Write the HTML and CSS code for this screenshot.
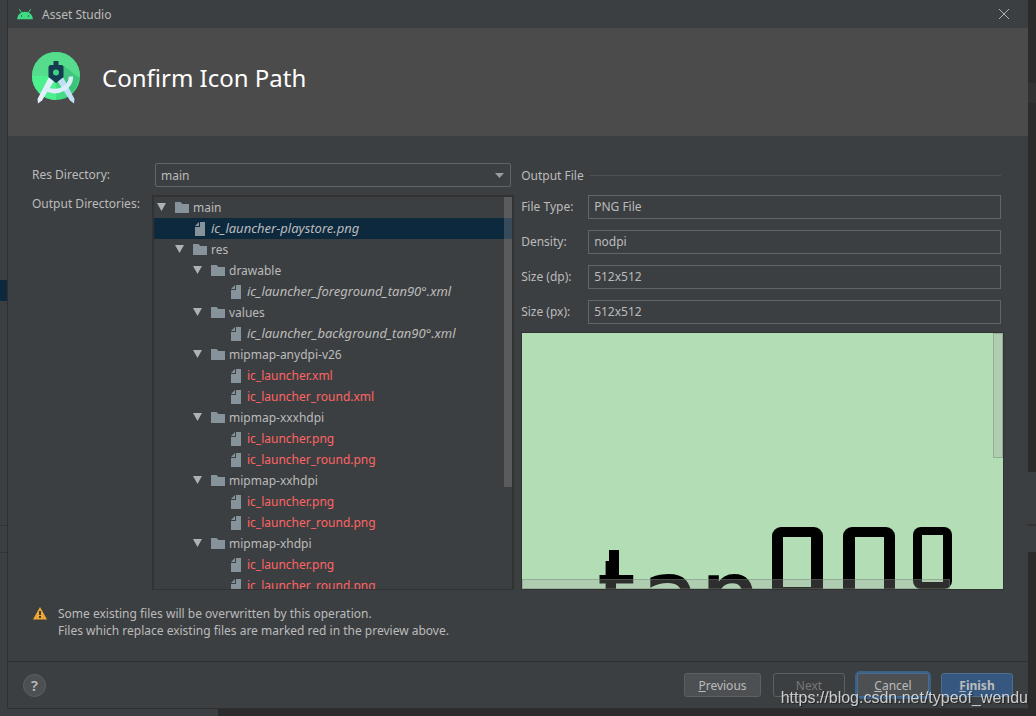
FILE: index.html
```html
<!DOCTYPE html>
<html lang="en">
<head>
    <meta charset="UTF-8">
    <meta name="viewport" content="width=device-width, initial-scale=1.0">
    <title>Asset Studio</title>
    <link rel="stylesheet" href="styles.css">
</head>
<body>
    <!-- shared icons -->
    <svg class="sprite" width="0" height="0" aria-hidden="true">
        <symbol id="arrow" viewBox="0 0 10 9"><path d="M0 0h9L4.500 8z" fill="#afb1b3"/></symbol>
        <symbol id="folder" viewBox="0 0 14 11"><path d="M0 0h5.500l2 2H14v9H0z" fill="#87939a"/></symbol>
        <symbol id="file" viewBox="0 0 14 14"><path d="M7 0h5v14H2V5h5z" fill="#87939a"/><path d="M6 0v4H2z" fill="#87939a"/></symbol>
    </svg>

    <div class="ide-left"></div>
    <main class="dialog">
        <div class="titlebar">
            <svg class="android" width="16" height="11" viewBox="0 0 16 11">
                <path d="M0 10.300A8 7.600 0 0 1 16 10.300z" fill="#3ddc84"/>
                <path d="M2.600 .6l1.800 3M13.400 .6l-1.800 3" stroke="#3ddc84" stroke-linecap="round"/>
                <circle cx="4.500" cy="7" r=".7" fill="#2f4a3c"/>
                <circle cx="11.500" cy="7" r=".7" fill="#2f4a3c"/>
            </svg>
            <span class="title">Asset Studio</span>
            <button class="close" aria-label="Close">
                <svg width="10" height="10" viewBox="0 0 10 10"><path d="M0 0l10 10M10 0L0 10" stroke="#afb1b3"/></svg>
            </button>
        </div>

        <header class="banner">
            <svg width="48" height="52" viewBox="0 0 48 52">
                <circle cx="24" cy="24" r="24" fill="#43dc85"/>
                <path d="M0 24a24 24 0 0 1 48 0z" fill="#55dc8c"/>
                <path d="M0 24h24v24A24 24 0 0 1 0 24z" fill="#4df08e"/>
                <path d="M31 13l16 13a24 24 0 0 1-10 17L24 30z" fill="#35b873" opacity=".6"/>
                <path d="M16.500 26h5.500v3L10 48.500 6 51.500 5.500 47z" fill="#e3f0fb"/>
                <path d="M26 26h5.500l11 21-.5 4.500-4-3L26 30z" fill="#c3dff5"/>
                <path d="M14.500 37Q22 41 30 37.500 39 33.500 39 24.500" fill="none" stroke="#dcecfb" stroke-width="4.500"/>
                <path d="M21.500 9h5v4H30l1.500 1.500V25L24 31 16.500 25V14.500L18 13h3.500z" fill="#153b51"/>
                <circle cx="24" cy="20.500" r="3" fill="#3fd184"/>
            </svg>
            <h1>Confirm Icon Path</h1>
        </header>

        <div class="content">
            <label class="label-res" for="resDir">Res Directory:</label>
            <div class="combo">
                <select id="resDir"><option>main</option></select>
                <svg width="10" height="5" viewBox="0 0 10 5"><path d="M0 0h9L4.500 5z" fill="#9a9da0"/></svg>
            </div>

            <div class="label-out" id="treeLabel">Output Directories:</div>
            <div class="tree-box">
                <ul class="tree" role="tree" aria-labelledby="treeLabel">
                    <li class="dir"><svg class="arrow"><use href="#arrow"/></svg><svg class="folder"><use href="#folder"/></svg>main</li>
                    <li class="file level1 new selected"><svg><use href="#file"/></svg>ic_launcher-playstore.png</li>
                    <li class="dir level1"><svg class="arrow"><use href="#arrow"/></svg><svg class="folder"><use href="#folder"/></svg>res</li>
                    <li class="dir level2"><svg class="arrow"><use href="#arrow"/></svg><svg class="folder"><use href="#folder"/></svg>drawable</li>
                    <li class="file level3 new"><svg><use href="#file"/></svg>ic_launcher_foreground_tan90°.xml</li>
                    <li class="dir level2"><svg class="arrow"><use href="#arrow"/></svg><svg class="folder"><use href="#folder"/></svg>values</li>
                    <li class="file level3 new"><svg><use href="#file"/></svg>ic_launcher_background_tan90°.xml</li>
                    <li class="dir level2"><svg class="arrow"><use href="#arrow"/></svg><svg class="folder"><use href="#folder"/></svg>mipmap-anydpi-v26</li>
                    <li class="file level3 replace"><svg><use href="#file"/></svg>ic_launcher.xml</li>
                    <li class="file level3 replace"><svg><use href="#file"/></svg>ic_launcher_round.xml</li>
                    <li class="dir level2"><svg class="arrow"><use href="#arrow"/></svg><svg class="folder"><use href="#folder"/></svg>mipmap-xxxhdpi</li>
                    <li class="file level3 replace"><svg><use href="#file"/></svg>ic_launcher.png</li>
                    <li class="file level3 replace"><svg><use href="#file"/></svg>ic_launcher_round.png</li>
                    <li class="dir level2"><svg class="arrow"><use href="#arrow"/></svg><svg class="folder"><use href="#folder"/></svg>mipmap-xxhdpi</li>
                    <li class="file level3 replace"><svg><use href="#file"/></svg>ic_launcher.png</li>
                    <li class="file level3 replace"><svg><use href="#file"/></svg>ic_launcher_round.png</li>
                    <li class="dir level2"><svg class="arrow"><use href="#arrow"/></svg><svg class="folder"><use href="#folder"/></svg>mipmap-xhdpi</li>
                    <li class="file level3 replace"><svg><use href="#file"/></svg>ic_launcher.png</li>
                    <li class="file level3 replace"><svg><use href="#file"/></svg>ic_launcher_round.png</li>
                </ul>
                <div class="tree-scroll"></div>
            </div>

            <section class="output">
                <h2>Output File</h2>
                <form class="fields">
                    <label for="fileType">File Type:</label>
                    <input id="fileType" type="text" value="PNG File" readonly>
                    <label for="density">Density:</label>
                    <input id="density" type="text" value="nodpi" readonly>
                    <label for="sizeDp">Size (dp):</label>
                    <input id="sizeDp" type="text" value="512x512" readonly>
                    <label for="sizePx">Size (px):</label>
                    <input id="sizePx" type="text" value="512x512" readonly>
                </form>
                <div class="preview">
                    <!-- launcher icon at full size, cut off by the viewport -->
                    <svg width="512" height="512" viewBox="0 0 512 512">
                        <text class="icon-text" x="76 120 179" y="294">tan</text>
                        <rect x="87" y="217" width="10" height="30"/>
                        <rect x="250" y="194" width="51" height="70" rx="9"/>
                        <rect x="261" y="204" width="28" height="50" fill="#b3ddb4"/>
                        <rect x="321" y="194" width="52" height="90" rx="9"/>
                        <rect x="333" y="204" width="29" height="70" fill="#b3ddb4"/>
                        <rect x="391" y="194" width="39" height="62" rx="8"/>
                        <rect x="400" y="202" width="21" height="47" fill="#b3ddb4"/>
                    </svg>
                    <div class="scroll-v"></div>
                    <div class="scroll-h"></div>
                </div>
            </section>
        </div>

        <div class="warning">
            <svg width="14" height="13" viewBox="0 0 14 13">
                <path d="M7 0l7 12.500H0z" fill="#f0a732"/>
                <path d="M6 4h2v4H6zM6 9h2v2H6z" fill="#3c3f41"/>
            </svg>
            <p>Some existing files will be overwritten by this operation.<br>Files which replace existing files are marked red in the preview above.</p>
        </div>

        <footer class="buttons">
            <button class="help">?</button>
            <button class="previous"><u>P</u>revious</button>
            <button disabled>Next</button>
            <button class="focused"><u>C</u>ancel</button>
            <button class="finish"><u>F</u>inish</button>
        </footer>
    </main>
    <div class="ide-right"></div>
    <div class="ide-bottom"></div>
    <div class="watermark">https://blog.csdn.net/typeof_wendu</div>
</body>
</html>
```
FILE: styles.css
```css
* {
    box-sizing: border-box;
}
body {
    margin: 0;
    height: 100vh;
    display: grid;
    grid-template-columns: 7px 1fr 8px;
    grid-template-rows: minmax(0, 1fr) 7px;
    background: #2b2b2b;
    color: #bbbbbb;
    font-family: "Noto Sans", "Open Sans", sans-serif;
    font-size: 12px;
    overflow: hidden;
}
button, input, select {
    font: inherit;
    color: inherit;
}
.sprite {
    position: absolute;
}

/* parts of the IDE behind the dialog */
.ide-left {
    background: linear-gradient(#3c3f41 280px, #0d293e 280px, #0d293e 301px, #3c3f41 301px, #3c3f41 525px, #323232 525px, #323232 526px, #3c3f41 526px, #3c3f41 552px, #323232 552px, #323232 553px, #3c3f41 553px);
}
.ide-right {
    background: linear-gradient(#2b2b2b 83px, #323232 83px, #323232 103px, #2b2b2b 103px, #2b2b2b 472px, #3c3f41 472px, #3c3f41 524px, #323232 524px, #323232 526px, #3c3f41 526px, #3c3f41 552px, #2b2b2b 552px);
}
.ide-bottom {
    grid-column: 1 / 4;
    background: linear-gradient(90deg, #3c3f41 218px, #2b2b2b 218px);
}

.dialog {
    display: flex;
    flex-direction: column;
    background: #3c3f41;
    border-left: 1px solid #2d2f30;
    border-bottom: 1px solid #2d2f30;
}
.titlebar {
    display: flex;
    align-items: center;
    height: 28px;
    padding: 0 19px 0 9px;
}
.title {
    flex: 1;
    margin-left: 9px;
}
.close {
    display: flex;
    padding: 0;
    background: none;
    border: none;
}
.banner {
    display: flex;
    align-items: center;
    gap: 22px;
    height: 108px;
    padding: 0 24px 8px;
    background: #4b4b4b;
    color: white;
}
.banner h1 {
    margin: 0;
    padding-bottom: 2px;
    font-size: 24px;
    font-weight: normal;
}

.content {
    flex: 1;
    min-height: 0;
    display: grid;
    grid-template-columns: 113px minmax(0, 3fr) minmax(0, 4fr);
    grid-template-rows: 24px minmax(0, 1fr);
    gap: 8px 7px;
    padding: 27px 24px 0;
    line-height: 17px;
}
.label-res {
    line-height: 24px;
}
.label-out {
    white-space: nowrap;
}
.combo {
    position: relative;
    margin: 0 3px;
}
.combo select {
    width: 100%;
    height: 24px;
    padding: 0 5px;
    appearance: none;
    background: #3c3f41;
    border: 1px solid #646464;
    border-radius: 2px;
}
.combo svg {
    position: absolute;
    right: 6px;
    top: 10px;
    pointer-events: none;
}

.tree-box {
    position: relative;
    overflow: hidden;
    border: 2px solid #323232;
    border-bottom-width: 1px;
}
.tree {
    margin: 0;
    padding: 0;
    list-style: none;
}
.tree li {
    display: flex;
    align-items: center;
    height: 21px;
    padding-left: 3px;
    white-space: nowrap;
}
.tree svg {
    flex: none;
    width: 14px;
    height: 14px;
    margin-right: 4px;
}
.tree .folder {
    height: 11px;
}
.tree .arrow {
    width: 10px;
    height: 9px;
    margin-right: 8px;
}
.tree .level1 {
    padding-left: 21px;
}
.tree .level2 {
    padding-left: 39px;
}
.tree .file.level1 {
    padding-left: 39px;
}
.tree .file.level3 {
    padding-left: 75px;
}
.tree .new {
    font-size: 13px;
    font-style: italic;
}
.tree .replace {
    color: #ff6464;
}
.tree .selected {
    background: #0d293e;
}
.tree-scroll {
    position: absolute;
    top: 0;
    right: 0;
    width: 8px;
    height: 74%;
    background: rgba(166, 166, 166, 0.28);
}

.output {
    grid-column: 3;
    grid-row: 1 / 3;
    display: flex;
    flex-direction: column;
}
.output h2 {
    display: flex;
    align-items: center;
    gap: 6px;
    height: 24px;
    margin: 0 3px 8px 0;
    font-size: 12px;
    font-weight: normal;
}
.output h2::after {
    content: "";
    flex: 1;
    border-top: 1px solid #515151;
}
.fields {
    display: grid;
    grid-template-columns: 67px 1fr;
    row-gap: 11px;
    margin-right: 3px;
}
.fields label {
    line-height: 24px;
}
.fields input {
    width: 100%;
    height: 24px;
    padding: 0 5px 1px;
    background: #3c3f41;
    border: 1px solid #646464;
}
.preview {
    position: relative;
    flex: 1;
    min-height: 0;
    margin-top: 8px;
    overflow: hidden;
    background: #b3ddb4;
    border: 1px solid #323232;
}
.icon-text {
    font-family: "DejaVu Sans", sans-serif;
    font-size: 93px;
    stroke: black;
    stroke-width: 2px;
}
.scroll-v, .scroll-h {
    position: absolute;
    background: rgba(166, 166, 166, 0.28);
    border: 1px solid rgba(110, 125, 110, 0.4);
}
.scroll-v {
    top: 0;
    right: 0;
    width: 10px;
    height: 49%;
}
.scroll-h {
    bottom: 0;
    left: 0;
    width: 89%;
    height: 10px;
}

.warning {
    display: flex;
    gap: 11px;
    padding: 15px 25px 22px;
    line-height: 17px;
}
.warning svg {
    margin-top: 2px;
}
.warning p {
    margin: 0;
}

.buttons {
    display: flex;
    align-items: center;
    gap: 12px;
    height: 47px;
    padding: 0 15px;
    border-top: 1px solid #2d2f30;
}
.buttons button {
    width: 72px;
    height: 24px;
    padding: 0;
    background: #4c5052;
    border: 1px solid #5e6060;
    border-radius: 3px;
}
.buttons .help {
    width: 23px;
    height: 23px;
    margin-right: auto;
    border-radius: 50%;
    font-size: 15px;
    font-weight: 600;
    line-height: 20px;
}
.buttons .previous {
    width: 77px;
}
.buttons button:disabled {
    background: none;
    color: #777777;
}
.buttons .focused {
    border-color: #466d94;
    box-shadow: 0 0 0 2px #3d6185;
}
.buttons .finish {
    background: #365880;
    border-color: #4c708c;
    font-weight: bold;
}

.watermark {
    position: fixed;
    right: 8px;
    bottom: 9px;
    color: rgba(255, 255, 255, 0.75);
    font: 16px/18px "Liberation Sans", Arial, sans-serif;
    text-shadow: 1px 1px 1px rgba(0, 0, 0, 0.5);
}
```
